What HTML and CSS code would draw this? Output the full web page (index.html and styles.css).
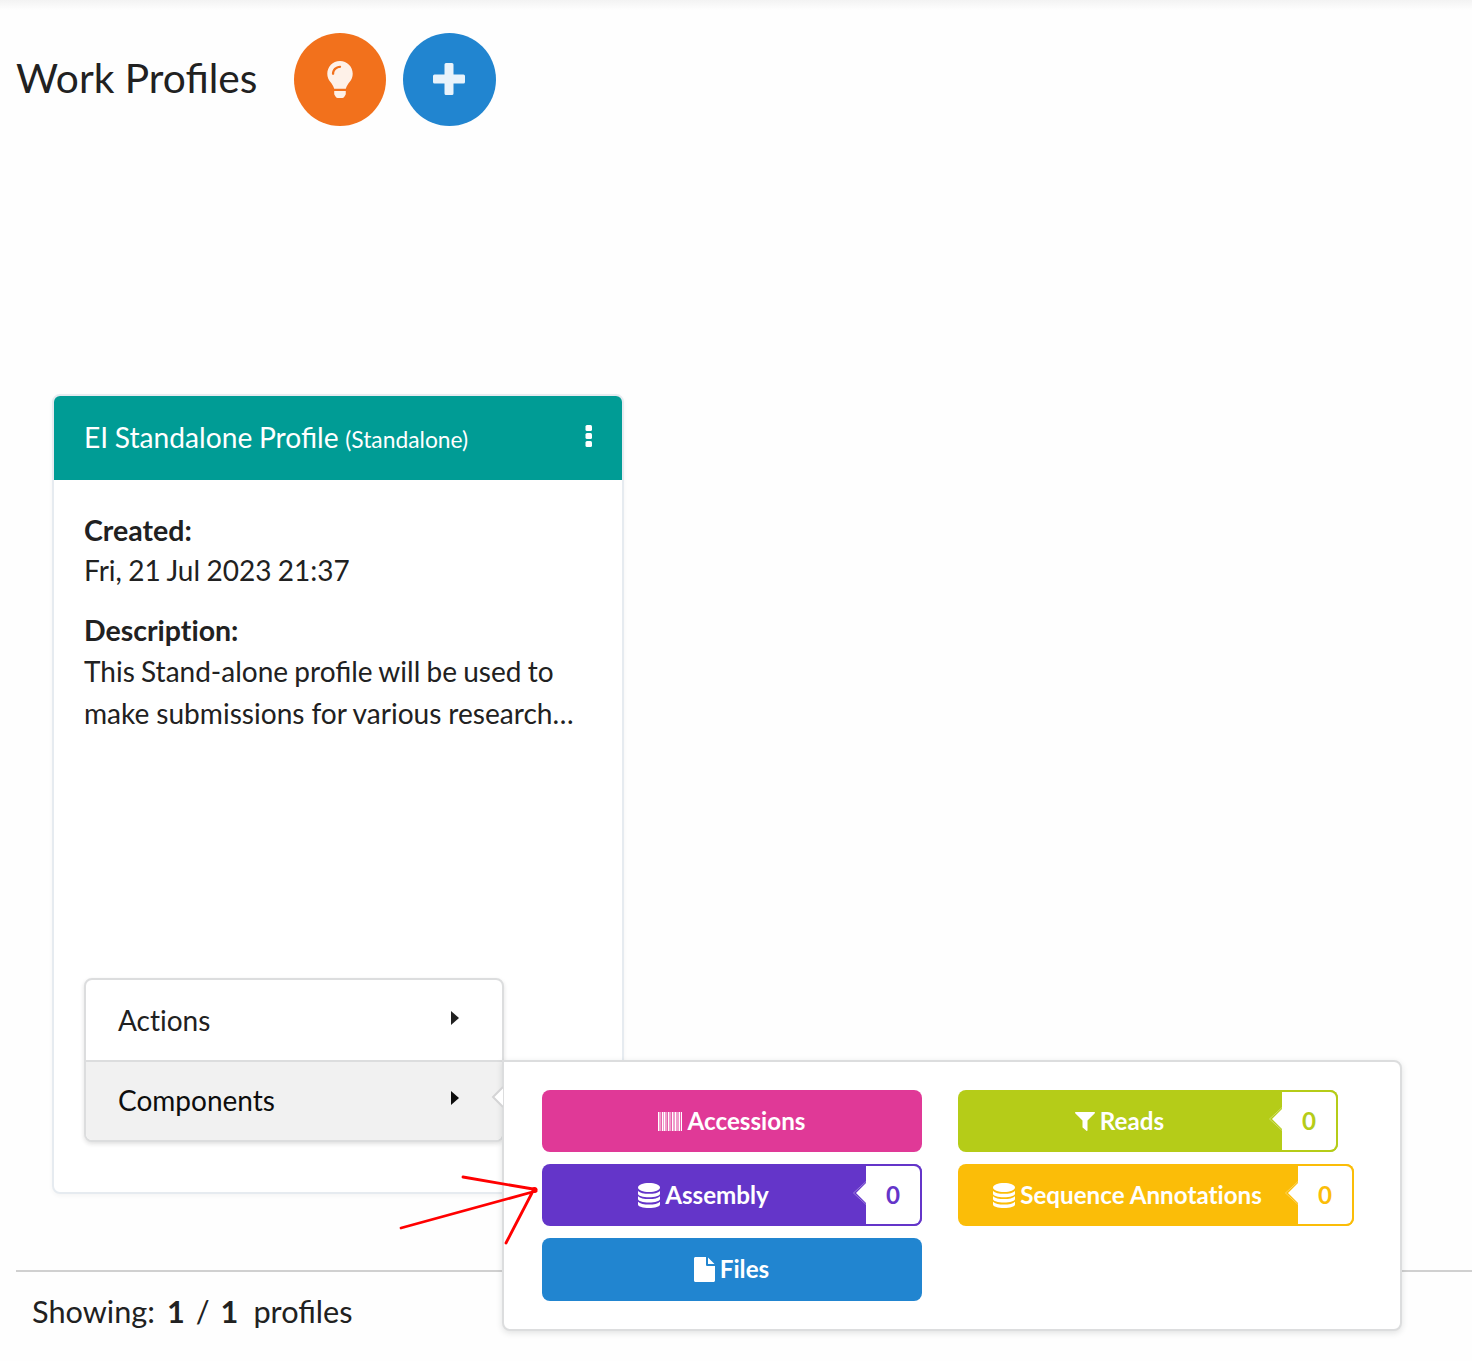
FILE: index.html
```html
<!DOCTYPE html>
<html lang="en">
<head>
<meta charset="utf-8">
<title>Work Profiles</title>
<link rel="stylesheet" href="styles.css">
</head>
<body>
<main class="page">
  <header class="page-header">
    <h1 class="page-title">Work Profiles</h1>
    <button class="round-button orange" aria-label="Quick tour">
      <svg width="26" height="37" viewBox="0 0 352 512"><path d="M96.06 454.35c.01 6.29 1.87 12.45 5.36 17.69l17.09 25.69a31.99 31.99 0 0 0 26.64 14.28h61.71a31.99 31.99 0 0 0 26.64-14.28l17.09-25.69a31.989 31.989 0 0 0 5.36-17.69l.04-38.35H96.01l.05 38.35zM0 176c0 44.37 16.45 84.85 43.56 115.78 16.52 18.85 42.36 58.23 52.21 91.45.04.26.07.52.11.78h160.24c.04-.26.07-.51.11-.78 9.85-33.22 35.69-72.6 52.21-91.45C335.55 260.85 352 220.37 352 176 352 78.61 272.91-.3 175.45 0 73.44.31 0 82.97 0 176zm176-80c-44.11 0-80 35.89-80 80 0 8.84-7.16 16-16 16s-16-7.16-16-16c0-61.76 50.24-112 112-112 8.84 0 16 7.16 16 16s-7.16 16-16 16z"/></svg>
    </button>
    <button class="round-button blue" aria-label="Add profile">
      <svg width="32" height="32" viewBox="0 0 32 32"><path d="M13 0h6q1.500 0 1.500 1.500v10h10q1.500 0 1.500 1.500v6q0 1.500-1.500 1.500h-10v10q0 1.500-1.500 1.500h-6q-1.500 0-1.500-1.500v-10h-10Q0 20.500 0 19v-6q0-1.500 1.500-1.500h10v-10Q11.500 0 13 0z"/></svg>
    </button>
  </header>

  <article class="card">
    <div class="card-header">
      <h2 class="card-title">EI Standalone Profile <small>(Standalone)</small></h2>
      <svg class="more" width="8" height="22" viewBox="0 0 8 22"><rect x=".5" width="6.500" height="6" rx="1.500"/><rect x=".5" y="8" width="6.500" height="6" rx="1.500"/><rect x=".5" y="16" width="6.500" height="6" rx="1.500"/></svg>
    </div>
    <div class="card-body">
      <dl class="details">
        <dt>Created:</dt>
        <dd class="created">Fri, 21 Jul 2023 21:37</dd>
        <dt>Descript&zwnj;ion:</dt>
        <dd class="description">This Stand-alone profile will be used to <span class="second-line">make submissions for various research…</span></dd>
      </dl>
      <nav class="menu">
        <a class="menu-item"><span class="menu-label">Act&zwnj;ions</span><span class="caret"></span></a>
        <a class="menu-item active"><span class="menu-label">Components</span><span class="caret"></span></a>
        <div class="popup">
          <svg class="popup-tip" width="12" height="22" viewBox="0 0 12 22"><path class="tip-fill" d="M12 1L2 11l10 10z"/><path class="tip-line" d="M12 1L2 11l10 10"/></svg>
          <div class="popup-column">
            <a class="component pink"><span class="component-name"><svg width="25" height="19" viewBox="0 0 25 19"><path opacity=".5" d="M0 0h24v19H0z"/><path d="M0 0h1v19H0zM4 0h1v19H4zM6 0h1v19H6zM10 0h1v19h-1zM14 0h1v19h-1zM17 0h1v19h-1zM21 0h1v19h-1zM23 0h1v19h-1z"/><path class="gap" d="M3 0h1v19H3zM9 0h1v19H9zM13 0h1v19h-1zM22 0h1v19h-1z"/></svg>Accessions</span></a>
            <a class="component violet"><span class="component-name"><svg width="22" height="25" viewBox="0 0 22 25"><path d="M0 4.500C0 2 5 0 11 0s11 2 11 4.500S17 9 11 9 0 7 0 4.500z"/><path d="M0 8c2 2 6 2.800 11 2.800s9-.8 11-2.800v2.700c0 2-5 3.500-11 3.500S0 12.700 0 10.700z"/><path d="M0 13.300c2 2 6 2.800 11 2.800s9-.8 11-2.800V16c0 2-5 3.500-11 3.500S0 18 0 16z"/><path d="M0 18.700c2 2 6 2.800 11 2.800s9-.8 11-2.800v2.700c0 2-5 3.500-11 3.500S0 23.400 0 21.400z"/></svg>Assembly</span><span class="count"><svg class="count-tip" width="14" height="24" viewBox="0 0 14 24"><path class="tip-fill" d="M14 2L4 12l10 10z"/><path class="tip-edge" d="M14 .5L1.500 12 14 23.500"/></svg>0</span></a>
            <a class="component blue files"><span class="component-name"><svg width="21" height="25" viewBox="0 0 21 25"><path d="M1.500 0H12v7.500C12 8.500 12.500 9 13.500 9H21v14.500c0 .8-.7 1.500-1.500 1.500h-18C.7 25 0 24.300 0 23.500v-22C0 .7.700 0 1.500 0zM14 .5L20.500 7H14z"/></svg>Files</span></a>
          </div>
          <div class="popup-column">
            <a class="component olive"><span class="component-name"><svg width="20" height="19" viewBox="0 0 20 19"><path d="M.7 0h18.600c.7 0 .9.800.5 1.300L12.500 8.600v9.700c0 .6-.6.900-1.100.5l-3.500-3c-.3-.3-.4-.5-.4-.9V8.600L.2 1.300C-.2.800 0 0 .7 0z"/></svg>Reads</span><span class="count"><svg class="count-tip" width="14" height="24" viewBox="0 0 14 24"><path class="tip-fill" d="M14 2L4 12l10 10z"/><path class="tip-edge" d="M14 .5L1.500 12 14 23.500"/></svg>0</span></a>
            <a class="component yellow"><span class="component-name"><svg width="22" height="25" viewBox="0 0 22 25"><path d="M0 4.500C0 2 5 0 11 0s11 2 11 4.500S17 9 11 9 0 7 0 4.500z"/><path d="M0 8c2 2 6 2.800 11 2.800s9-.8 11-2.800v2.700c0 2-5 3.500-11 3.500S0 12.700 0 10.700z"/><path d="M0 13.300c2 2 6 2.800 11 2.800s9-.8 11-2.800V16c0 2-5 3.500-11 3.500S0 18 0 16z"/><path d="M0 18.700c2 2 6 2.800 11 2.800s9-.8 11-2.800v2.700c0 2-5 3.500-11 3.500S0 23.400 0 21.400z"/></svg>Sequence Annotat&zwnj;ions</span><span class="count"><svg class="count-tip" width="14" height="24" viewBox="0 0 14 24"><path class="tip-fill" d="M14 2L4 12l10 10z"/><path class="tip-edge" d="M14 .5L1.500 12 14 23.500"/></svg>0</span></a>
          </div>
          <svg class="pointer" width="142" height="72" viewBox="398 1174 142 72"><path d="M401 1228L536 1191M463 1177L536 1189.500M533 1191L506 1243"/><circle cx="534.500" cy="1190" r="1.500"/></svg>
        </div>
      </nav>
    </div>
  </article>

  <footer class="page-footer">Showing: <b class="shown">1</b> / <b class="total">1</b> profiles</footer>
</main>
</body>
</html>
```

FILE: styles.css
```css
* { box-sizing: border-box; }
body { margin: 0; background: #fefefe; color: #212121; font: 28px/40px Lato, sans-serif; }
h1, h2, dl, dd { margin: 0; font-weight: 400; }
.page { height: 1361px; overflow: hidden; padding: 33px 0 0 16px; background: linear-gradient(#f3f3f3, #fefefe 10px); }
.page-header { display: flex; align-items: center; height: 93px; }
.page-title { width: 278px; padding-bottom: 4px; font-size: 40.7px; line-height: 48px; }
.round-button { display: flex; align-items: center; justify-content: center; width: 93px; height: 93px; margin: 0; padding: 0 1px 1px 0; border: 0; border-radius: 50%; }
.round-button svg { fill: rgba(255,255,255,.9); }
.round-button.orange { width: 92px; margin-right: 17px; padding: 0; }
.orange { background: #f2711c; }
.blue { background: #2185d0; }

.card { display: flex; flex-direction: column; width: 572px; height: 800px; margin: 268px 0 0 36px; border: 2px solid #e6ebf0; border-radius: 8px; background: #fff; box-shadow: 0 2px 4px rgba(0,0,0,.04); }
.card-header { display: flex; align-items: center; justify-content: space-between; height: 84px; padding: 0 29px 0 30px; border-radius: 6px 6px 0 0; background: #009c95; color: #fff; }
.card-title { font-size: 28.2px; word-spacing: -.6px; }
.card-title small { font-size: 22.8px; }
.more { margin-top: -4px; fill: #fff; }
.card-body { display: flex; flex: 1; flex-direction: column; justify-content: space-between; padding: 30px 30px 50px; }
dt { font-size: 28.5px; font-weight: 700; }
.created { margin-bottom: 20px; word-spacing: -.75px; }
.description { line-height: 42px; word-spacing: -.9px; }
.second-line { font-size: 28.1px; word-spacing: -.3px; }

.menu { position: relative; width: 420px; border: 2px solid #dcddde; border-radius: 8px; background: #fff; box-shadow: 0 2px 4px rgba(34,36,38,.14); }
.menu-item { display: flex; align-items: center; justify-content: space-between; height: 80px; padding: 0 42px 0 32px; }
.menu-item.active { padding-bottom: 2px; border-top: 2px solid #dcddde; border-radius: 0 0 6px 6px; background: #f1f1f1; color: #0d0d0d; }
.caret { width: 0; margin-top: -5px; border: 7px solid transparent; border-right: 0; border-left: 8px solid currentColor; margin-right: 1px; }
.popup { position: absolute; top: 80px; left: 416px; display: flex; gap: 36px; width: 900px; height: 271px; padding: 28px 38px; border: 2px solid #dcddde; border-radius: 0 8px 8px 8px; background: #fff; box-shadow: 0 2px 6px rgba(34,36,38,.13); }
.popup-tip { position: absolute; top: 24px; left: -13px; }
.tip-fill { fill: #fff; }
.tip-line { fill: none; stroke: #d4d4d5; stroke-width: 2; }
.popup-column { display: flex; flex-direction: column; align-items: flex-start; gap: 12px; }

.component { display: flex; min-width: 380px; height: 62px; border-radius: 8px; color: #fff; font-size: 24.2px; font-weight: 700; }
.component.files { height: 63px; }
.files .component-name { padding-bottom: 1px; }
.component.yellow { width: 396px; }
.component-name { display: flex; flex: 1; align-items: center; justify-content: center; gap: 5px; padding-right: 1px; white-space: nowrap; }
.component-name svg { fill: #fff; }
.component-name .gap { fill: #e03997; fill-opacity: .6; }
.count { position: relative; display: flex; align-items: center; justify-content: center; width: 56px; border: 2px solid; border-left: 0; border-radius: 0 8px 8px 0; background: #fff; }
.count-tip { position: absolute; top: 15px; left: -14px; }
.tip-edge { fill: none; stroke: #fff; stroke-opacity: .35; stroke-width: 1; }
.pink { background: #e03997; }
.violet { background: #6435c9; }
.violet .count { color: #6435c9; }
.olive { background: #b5cc18; }
.olive .count { color: #b5cc18; }
.yellow { background: #fbbd08; }
.yellow .count { color: #fbbd08; }
.pointer { position: absolute; top: 112px; left: -106px; fill: #f00; stroke: #f00; stroke-width: 2.8; stroke-linecap: round; }
.pointer path { fill: none; }

.page-footer { display: flex; gap: 12px; margin-top: 76px; padding: 20px 16px; border-top: 2px solid #d0d0d0; font-size: 30.7px; }
.shown { margin-right: -1px; }
.total { margin: 0 3px 0 -1px; }
```
